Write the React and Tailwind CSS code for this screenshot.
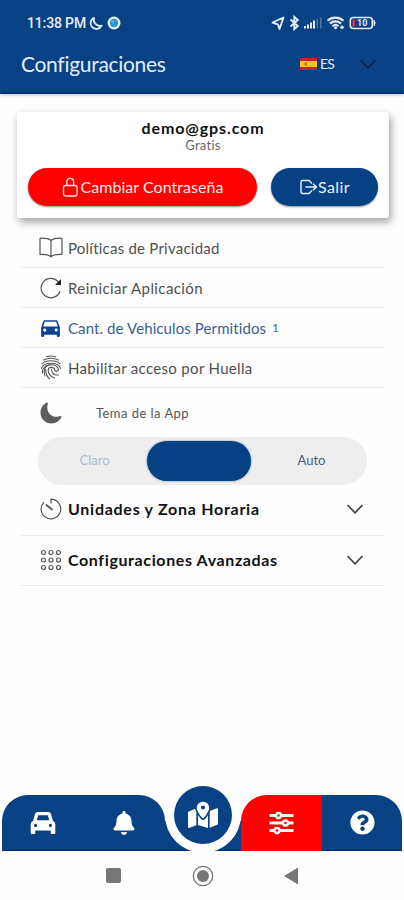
import React from "react";
import clsx from "clsx";
import { FaBell, FaQuestionCircle } from "react-icons/fa";
import { FaMapLocationDot } from "react-icons/fa6";
import { IoMoon } from "react-icons/io5";
import { MdDirectionsCar } from "react-icons/md";

export default function App() {
  return (
    <div className="flex flex-col w-full h-[900px] overflow-hidden bg-[#fefefe] font-['Lato','Open_Sans',sans-serif] text-[#505050]">
      <header className="flex flex-col h-[94px] shrink-0 bg-[#084284] border-b-2 border-[#06356f] text-[#e3edf8] shadow-[0_1px_3px_rgba(0,0,0,0.25)]">
        <StatusBar />
        <div className="flex items-center h-9 pl-[21px] pr-[27px]">
          <h1 className="text-[21px] leading-9 tracking-[-0.3px] whitespace-nowrap">
            Configuraciones
          </h1>
          <div className="flex items-center ml-auto">
            <SpainFlag />
            <span className="ml-[3px] w-[14px] text-sm leading-none tracking-[-0.8px]">ES</span>
            <Chevron className="ml-[25px] text-[#0b2346]" />
          </div>
        </div>
      </header>

      <main className="flex flex-col flex-1 pt-[18px]">
        <AccountCard />
        <div className="ml-[21px] mr-[19px] mt-[10px]">
          <Row icon={<BookIcon />} text="Políticas de Privacidad" className="tracking-[0.23px]" />
          <Row icon={<ReloadIcon />} text="Reiniciar Aplicación" className="tracking-[0.4px]" />
          <Row
            icon={<MdDirectionsCar size={25} className="shrink-0 text-[#0d4291]" />}
            text="Cant. de Vehiculos Permitidos"
            extra="1"
            className="text-[#3c5d96] tracking-[0.1px]"
          />
          <Row
            icon={<FingerprintIcon />}
            text="Habilitar acceso por Huella"
            className="tracking-[0.32px]"
          />
          <ThemePicker />
          <Section icon={<TimerIcon />} text="Unidades y Zona Horaria" className="h-[51px] pb-[2px]" textClassName="tracking-[0.73px]" />
          <Section icon={<GridIcon />} text="Configuraciones Avanzadas" className="h-[50px] pb-[2px]" textClassName="tracking-[0.62px]" />
        </div>
      </main>

      <TabBar />
      <AndroidNav />
    </div>
  );
}

function StatusBar() {
  return (
    <div className="flex items-center h-[46px] pl-[27px] pr-[27px] shrink-0">
      <span className="w-[60px] font-['Roboto',sans-serif] font-medium text-[14px] leading-none tracking-[-0.15px] whitespace-nowrap">
        11:38 PM
      </span>
      <svg className="ml-px" width="15" height="15" viewBox="0 0 15 15" fill="none" stroke="currentColor" strokeWidth="1.8" strokeLinejoin="round">
        <path d="M6 1.8A5.8 5.8 0 1 0 13.6 9.6 6.2 6.2 0 0 1 6 1.8Z" />
      </svg>
      <svg className="ml-[4px]" width="14" height="14" viewBox="0 0 14 14">
        <circle cx="7" cy="7" r="6.5" fill="#e8f4fc" />
        <circle cx="7" cy="7" r="4.2" fill="#2f93d3" />
        <circle cx="5.8" cy="5.8" r="1.6" fill="#58b4e6" />
      </svg>
      <svg className="ml-auto" width="107" height="18" viewBox="0 0 107 18" fill="none" stroke="currentColor">
        {/* location */}
        <path d="M2.5 8.500 13.500 3.500 9.500 15 7.800 10.300Z" strokeWidth="1.900" strokeLinejoin="round" />
        {/* bluetooth */}
        <path d="M20.500 5.500 27.800 12 24.300 15.200V2.800L27.800 6 20.500 12.500" strokeWidth="1.900" />
        {/* signal */}
        <g stroke="none" fill="currentColor">
          <rect x="34" y="12" width="2" height="2.5" />
          <rect x="37" y="10.5" width="2" height="4" />
          <rect x="40" y="8.5" width="2" height="6" />
          <rect x="43" y="6.5" width="2" height="8" />
          <rect x="46.5" y="5" width="1.6" height="9.5" opacity="0.3" />
          <rect x="50" y="3.5" width="1.6" height="11" opacity="0.3" />
        </g>
        {/* wifi */}
        <path d="M57.5 6.700A12 12 0 0 1 73.500 6.700M60 9.600A8 8 0 0 1 71 9.600M62.500 12.200A4.500 4.500 0 0 1 68.500 12.200" strokeWidth="2.200" />
        <circle cx="65.5" cy="13.8" r="1.5" fill="currentColor" stroke="none" />
        <circle cx="72" cy="13.2" r="1.8" fill="currentColor" stroke="none" />
        {/* battery */}
        <rect x="80.3" y="3.5" width="22" height="11" rx="3" strokeWidth="1.6" />
        <path d="M104 6.2Q106.3 9 104 11.8Z" fill="currentColor" />
        <rect x="82.5" y="5.5" width="2.4" height="7" fill="#e0354b" stroke="none" />
        <text x="87" y="12.2" fill="currentColor" stroke="none" className="font-['Roboto',sans-serif] text-[9px] font-bold">
          10
        </text>
      </svg>
    </div>
  );
}

function AccountCard() {
  return (
    <section className="flex flex-col items-center h-[106px] ml-[17px] mr-[15px] rounded-[3px] bg-white shadow-[2px_4px_9px_rgba(0,0,0,0.38)]">
      <p className="mt-[6px] text-base leading-5 font-bold text-[#111] tracking-[0.9px]">demo@gps.com</p>
      <p className="text-[13px] leading-[14px] text-[#666] tracking-[0.3px]">Gratis</p>
      <div className="flex w-full mt-[16px] pl-[11px] pr-[10px] gap-[14px]">
        <button className="flex items-center justify-center w-[229px] h-[38px] rounded-full bg-[#fe0000] text-[#ffe9e9] shadow-[0_1px_2px_rgba(0,0,0,0.45)] pl-px pb-px">
          <svg width="17" height="20" viewBox="0 0 17 20" fill="none" stroke="currentColor" strokeWidth="1.3">
            <rect x="1.5" y="8.5" width="13.5" height="10.5" rx="2" />
            <path d="M4.8 8.5V4.7a3.4 3.4 0 0 1 6.8 0v3.8" />
          </svg>
          <span className="ml-px text-base leading-5 tracking-[0.05px] whitespace-nowrap">Cambiar Contraseña</span>
        </button>
        <button className="flex items-center justify-center w-[107px] h-[38px] rounded-full bg-[#074183] text-[#e9f1fa] shadow-[0_1px_2px_rgba(0,0,0,0.45)] pb-px">
          <svg width="19" height="18" viewBox="0 0 19 18" fill="none" stroke="currentColor" strokeWidth="1.4" strokeLinejoin="round">
            <path d="M13 5.5 10 2.5H3.5a1.5 1.5 0 0 0-1.5 1.5v10a1.5 1.5 0 0 0 1.5 1.5H10l3-3M6.5 9H17.5M14 5.8 17.5 9 14 12.2" />
          </svg>
          <span className="text-base leading-5 tracking-[0.4px]">Salir</span>
        </button>
      </div>
    </section>
  );
}

function Row({ icon, text, extra, className }) {
  return (
    <div className="flex items-center h-10 border-b border-[#e8e8e8] pl-[18px]">
      <span className="flex items-center justify-center w-[23px] text-[#555]">{icon}</span>
      <span className={clsx("ml-[6px] text-[15px] leading-5 whitespace-nowrap", className)}>{text}</span>
      {extra && <span className="ml-[6px] text-[11px] leading-5 text-[#3c5d96]">{extra}</span>}
    </div>
  );
}

function ThemePicker() {
  return (
    <div>
      <div className="flex items-center h-[49px] pl-[18px]">
        <IoMoon size={24} className="text-[#5c5c5c]" />
        <span className="ml-[33px] text-[13px] leading-5 tracking-[0.46px] text-[#555]">Tema de la App</span>
      </div>
      <div className="flex items-center ml-[17px] w-[329px] h-[48px] p-1 rounded-full bg-[#eee] text-[13px]">
        <span className="w-[105px] text-center text-[#abbdd5]">Claro</span>
        <span className="w-[104px] h-10 rounded-full bg-[#074183] shadow-[0_0_2px_rgba(7,65,131,0.7)]" />
        <span className="flex-1 pl-[9px] text-center text-[#3f5f8e]">Auto</span>
      </div>
    </div>
  );
}

function Section({ icon, text, className, textClassName }) {
  return (
    <div className={clsx("flex items-center border-b border-[#e8e8e8] pl-[18px] pr-[21px]", className)}>
      <span className="flex items-center justify-center w-[23px] text-[#555]">{icon}</span>
      <span className={clsx("ml-[6px] text-base leading-5 font-bold text-[#111] whitespace-nowrap", textClassName)}>
        {text}
      </span>
      <Chevron className="ml-auto text-[#444]" />
    </div>
  );
}

function TabBar() {
  return (
    <nav className="relative flex h-[56px] shrink-0 mx-[2px] text-white">
      <div className="flex w-[163px] rounded-t-[26px] bg-[#084284] border-b border-[#04257a]">
        <div className="flex items-center justify-center w-[81px]">
          <CarFrontIcon />
        </div>
        <div className="flex items-center justify-center flex-1">
          <FaBell size={24} />
        </div>
      </div>
      <div className="self-end w-[76px] h-[30px] bg-[#084284] border-b border-[#04257a]" />
      <div className="flex items-center justify-center w-[81px] rounded-tl-[26px] bg-[#fe0000]">
        <SlidersIcon />
      </div>
      <div className="flex items-center justify-center flex-1 rounded-tr-[26px] bg-[#084284] border-b border-[#04257a]">
        <FaQuestionCircle size={25} />
      </div>
      {/* floating map button */}
      <div className="absolute left-[163px] top-[-18px] flex items-center justify-center size-[76px] rounded-full bg-[#fefefe]">
        <div className="flex items-center justify-center size-[58px] rounded-full bg-[#084284]">
          <FaMapLocationDot size={30} />
        </div>
      </div>
    </nav>
  );
}

function AndroidNav() {
  return (
    <div className="flex items-center h-[49px] shrink-0 pl-[106px] text-[#777]">
      <span className="size-[15px] rounded-[2px] bg-current" />
      <svg className="ml-[71px]" width="22" height="22" viewBox="0 0 22 22">
        <circle cx="11" cy="11" r="9.7" fill="none" stroke="currentColor" strokeWidth="1.3" />
        <circle cx="11" cy="11" r="6" fill="currentColor" />
      </svg>
      <svg className="ml-[70px]" width="14" height="18" viewBox="0 0 14 18">
        <path d="M0 9 14 0.5v17Z" fill="currentColor" />
      </svg>
    </div>
  );
}

function Chevron({ className }) {
  return (
    <svg className={className} width="18" height="12" viewBox="0 0 18 12" fill="none" stroke="currentColor" strokeWidth="1.7">
      <path d="M1.5 2 9 9.8 16.5 2" />
    </svg>
  );
}

function SpainFlag() {
  return (
    <svg width="17" height="12" viewBox="0 0 17 12">
      <rect width="17" height="12" rx="0.5" fill="#c3232f" />
      <rect y="3" width="17" height="6" fill="#fbc417" />
      <rect x="4.5" y="4.5" width="2.5" height="3" fill="#bd6b25" />
    </svg>
  );
}

function BookIcon() {
  return (
    <svg className="shrink-0" width="24" height="21" viewBox="0 0 24 21" fill="none" stroke="currentColor" strokeWidth="1.2" strokeLinejoin="round">
      <path d="M12 3.5C9.5 1.5 5 1 1 1.3V17.5C5 17.2 9.5 17.7 12 19.8 14.5 17.7 19 17.2 23 17.5V1.3C19 1 14.5 1.5 12 3.5ZV19.8" />
    </svg>
  );
}

function ReloadIcon() {
  return (
    <svg className="shrink-0" width="22" height="22" viewBox="0 0 22 22" fill="none" stroke="currentColor" strokeWidth="1.2">
      <path d="M20 14.2A9.7 9.7 0 1 1 18 4.5L20 6.5" />
      <path d="M21 2V8H15Z" fill="#222" stroke="none" />
    </svg>
  );
}

function FingerprintIcon() {
  return (
    <svg className="shrink-0" width="22" height="25" viewBox="0 0 22 25" fill="none" stroke="currentColor" strokeWidth="1.1" strokeLinecap="round">
      <path d="M6.5 1.800Q11 0.200 15.500 1.800M3.500 5Q11 1.500 18.500 5M2 8.800C6 4.800 16 4.800 20 8.800" />
      <path d="M1.500 13.500C3 6.500 19 6.500 20.500 13.500M2.500 18C1.500 8 18 7.500 18.500 14.500 18.500 17 15.200 17 14.800 14.800 14 11.500 8.500 11.500 8.200 15 8 18.500 10.500 22 14.500 23" />
      <path d="M5 21C3 14.500 5 11 9 10M11.500 14.500C11.500 18 14 20.500 18.500 20M9.500 23.800C6.500 21 5.500 18 5.800 14.500" />
    </svg>
  );
}

function TimerIcon() {
  return (
    <svg className="shrink-0" width="22" height="22" viewBox="0 0 22 22" fill="none" stroke="currentColor" strokeWidth="1.2" strokeLinecap="round">
      <path d="M11 5V1.2A9.8 9.8 0 1 1 3.8 4.3" />
      <path d="M6.5 7 11.8 11.5" strokeWidth="1.8" />
    </svg>
  );
}

function GridIcon() {
  const dots = [3.5, 11, 18.5];
  return (
    <svg className="shrink-0" width="22" height="22" viewBox="0 0 22 22" fill="none" stroke="currentColor" strokeWidth="1.2">
      {dots.map((y) => dots.map((x) => <circle key={`${x}-${y}`} cx={x} cy={y} r="2" />))}
    </svg>
  );
}

function CarFrontIcon() {
  return (
    <svg width="26" height="24" viewBox="0 0 26 24" fill="currentColor">
      <path
        fillRule="evenodd"
        d="M7.5 1h11a2.5 2.5 0 0 1 2.4 1.8l2 7A4 4 0 0 1 25.3 13.5V22a1 1 0 0 1-1 1h-2.6a1 1 0 0 1-1-1v-2.5H5.3V22a1 1 0 0 1-1 1H1.7a1 1 0 0 1-1-1v-8.5A4 4 0 0 1 3.1 9.8l2-7A2.5 2.5 0 0 1 7.5 1ZM8.3 4.2 6.7 9.3h12.6l-1.6-5.1ZM5.6 12.8a1.6 1.6 0 1 0 0 3.2 1.6 1.6 0 0 0 0-3.2ZM20.4 12.8a1.6 1.6 0 1 0 0 3.2 1.6 1.6 0 0 0 0-3.2Z"
      />
    </svg>
  );
}

function SlidersIcon() {
  return (
    <svg width="25" height="24" viewBox="0 0 25 24" fill="#fe0000" stroke="currentColor" strokeWidth="2.8">
      <path d="M0.5 4.5H24.5M0.5 12H24.5M0.5 19.5H24.5" />
      <circle cx="9.5" cy="4.5" r="2.5" strokeWidth="2.4" />
      <circle cx="16.5" cy="12" r="2.5" strokeWidth="2.4" />
      <circle cx="8" cy="19.5" r="2.5" strokeWidth="2.4" />
    </svg>
  );
}
